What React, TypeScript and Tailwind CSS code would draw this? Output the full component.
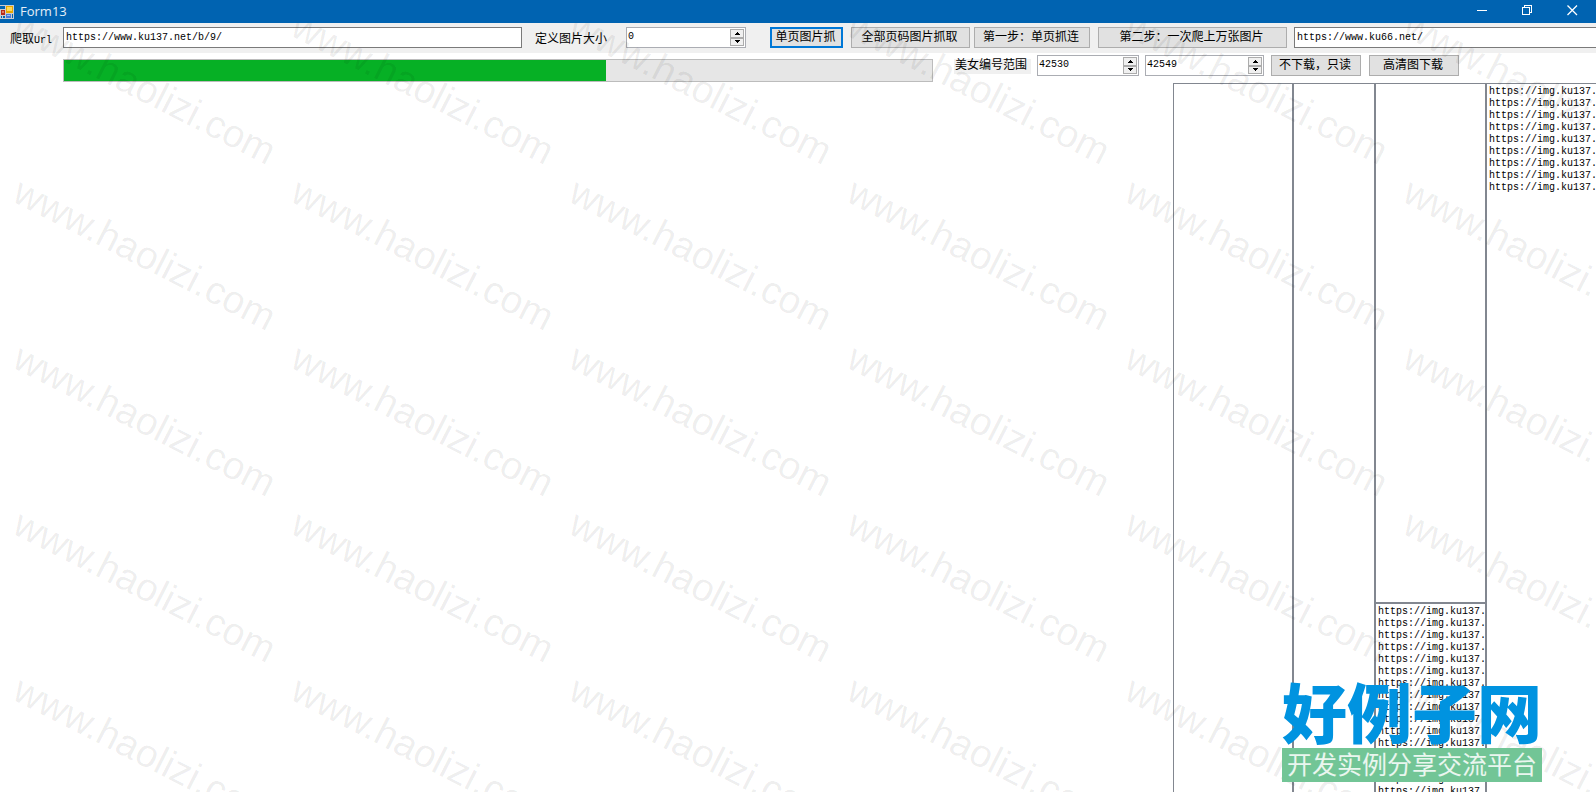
import { ChangeEvent, useState } from "react";
import clsx from "clsx";

const IMAGE_HOST = "https://img.ku137.";

const downloaded = Array.from({ length: 9 }, () => IMAGE_HOST);
const queued = Array.from({ length: 16 }, () => IMAGE_HOST);

export default function App() {
  const [pageUrl, setPageUrl] = useState("https://www.ku137.net/b/9/");
  const [siteUrl, setSiteUrl] = useState("https://www.ku66.net/");

  return (
    <div className="relative flex h-screen flex-col overflow-hidden bg-white font-['Liberation_Mono','Noto_Sans_CJK_SC',monospace] text-xs text-black">
      <TitleBar title="Form13" />

      {/* Toolbar */}
      <div className="flex h-[30px] shrink-0 items-start bg-[#f0f0f0] pt-1 pl-[10px]">
        <label htmlFor="page-url" className="mt-1 w-[53px] shrink-0 leading-[18px] whitespace-nowrap">
          爬取<span className="text-[10px]">Url</span>
        </label>
        <TextBox id="page-url" value={pageUrl} onChange={setPageUrl} className="w-[459px] shrink-0" />
        <label htmlFor="image-size" className="mt-1 ml-[13px] w-[91px] shrink-0 leading-[18px]">
          定义图片大小
        </label>
        <NumberBox id="image-size" initial={0} className="w-[120px]" />
        <PushButton className="ml-6 w-[73px]" focused>单页图片抓</PushButton>
        <PushButton className="ml-2 w-[119px]">全部页码图片抓取</PushButton>
        <PushButton className="ml-1 w-[116px]">第一步：单页抓连</PushButton>
        <PushButton className="ml-2 w-[189px]">第二步：一次爬上万张图片</PushButton>
        <TextBox id="site-url" label="站点" value={siteUrl} onChange={setSiteUrl} className="-mr-1 ml-[7px] min-w-0 flex-1" />
      </div>

      {/* Progress and id range */}
      <div className="flex h-[30px] shrink-0 items-start pt-[2px] pl-[63px]">
        <Progress value={542} max={868} />
        <label htmlFor="range-from" className="mt-1 ml-[21px] w-[77px] shrink-0 bg-[#f0f0f0] pl-px leading-[15px]">
          美女编号范围
        </label>
        <NumberBox id="range-from" initial={42530} className="ml-[6px] w-[102px]" />
        <NumberBox id="range-to" label="结束编号" initial={42549} className="ml-[6px] w-[119px]" />
        <PushButton className="ml-[7px] w-[90px]">不下载，只读</PushButton>
        <PushButton className="ml-2 w-[90px]">高清图下载</PushButton>
      </div>

      {/* Result lists, they run off the right and bottom edges of the window */}
      <div className="-mb-1 flex min-h-0 flex-1 justify-end">
        <ListBox items={[]} className="w-[120px]" />
        <ListBox items={[]} className="w-[82px]" />
        <div className="flex w-[111px] flex-col">
          <ListBox items={[]} className="h-[520px] shrink-0" />
          <ListBox items={queued} className="min-h-0 flex-1" />
        </div>
        <ListBox items={downloaded} className="-mr-1 w-[114px]" />
      </div>

      <Watermark />
      <SiteLogo />
    </div>
  );
}

function TitleBar({ title }: { title: string }) {
  return (
    <header className="flex h-[23px] shrink-0 items-center bg-[#0063b1] text-white">
      <svg className="h-[14px] w-[14px] shrink-0" viewBox="0 0 14 14" shapeRendering="crispEdges">
        <rect width="14" height="14" fill="#c9ccd2" />
        <rect x="0" y="1" width="5" height="3" fill="#0063b1" />
        <rect x="1" y="5" width="4" height="5" fill="#b82a1a" />
        <rect x="2" y="6" width="2" height="2" fill="#e07a60" />
        <rect x="6" y="1" width="7" height="7" fill="#e9a800" />
        <rect x="7" y="2" width="5" height="4" fill="#ffd95a" />
        <rect x="1" y="11" width="1" height="2" fill="#0063b1" />
        <rect x="3" y="11" width="2" height="2" fill="#0063b1" />
        <rect x="6" y="9" width="5" height="4" fill="#4a7ad8" />
        <rect x="7" y="10" width="3" height="1" fill="#9dbcf5" />
        <rect x="12" y="9" width="1" height="4" fill="#0063b1" />
      </svg>
      <h1 className="ml-[6px] flex-1 pb-px font-['Open_Sans','Noto_Sans',sans-serif] text-[13px] leading-5 text-white/90">{title}</h1>
      <div className="flex h-[21px] self-start pr-px">
        <button type="button" aria-label="Minimize" className="flex w-[45px] items-center justify-center">
          <svg className="h-[11px] w-[11px]" viewBox="0 0 11 11" shapeRendering="crispEdges">
            <path d="M0 5.5h10" stroke="white" />
          </svg>
        </button>
        <button type="button" aria-label="Restore" className="flex w-[45px] items-center justify-center">
          <svg className="h-[11px] w-[11px]" viewBox="0 0 11 11" fill="none" stroke="white" shapeRendering="crispEdges">
            <rect x="0.5" y="2.5" width="7" height="7" />
            <path d="M2.5 2.5v-2h7v7h-2" />
          </svg>
        </button>
        <button type="button" aria-label="Close" className="flex w-[45px] items-center justify-center">
          <svg className="h-[11px] w-[11px]" viewBox="0 0 11 11" stroke="white" strokeWidth="1.3">
            <path d="M0.5 0.5l9.5 9.5M10 0.5l-9.5 9.5" />
          </svg>
        </button>
      </div>
    </header>
  );
}

interface TextBoxProps {
  id: string;
  label?: string;
  value: string;
  onChange: (value: string) => void;
  className?: string;
}

function TextBox({ id, label, value, onChange, className }: TextBoxProps) {
  return (
    <input
      id={id}
      type="text"
      aria-label={label}
      value={value}
      onChange={(e: ChangeEvent<HTMLInputElement>) => onChange(e.target.value)}
      className={clsx("h-[21px] border border-[#7a7a7a] bg-white pl-[2px] text-[10px] outline-none", className)}
    />
  );
}

interface NumberBoxProps {
  id: string;
  label?: string;
  initial: number;
  className?: string;
}

function NumberBox({ id, label, initial, className }: NumberBoxProps) {
  const [value, setValue] = useState(initial);

  return (
    <div className={clsx("flex h-[21px] shrink-0 border border-[#abadb3] bg-white p-px", className)}>
      <input
        id={id}
        type="text"
        inputMode="numeric"
        aria-label={label}
        value={value}
        onChange={(e: ChangeEvent<HTMLInputElement>) => setValue(Number(e.target.value) || 0)}
        className="min-w-0 flex-1 pb-[2px] text-[10px] outline-none"
      />
      <div className="flex w-[14px] flex-col bg-[#f0f0f0]">
        <button type="button" aria-label="Increase" onClick={() => setValue(value + 1)} className="flex flex-1 items-center justify-center border border-[#acacac]">
          <svg className="h-[3px] w-[5px] shrink-0" viewBox="0 0 5 3" shapeRendering="crispEdges">
            <path d="M2 0h1v1h1v1h1v1H0V2h1V1h1z" />
          </svg>
        </button>
        <button type="button" aria-label="Decrease" onClick={() => setValue(value - 1)} className="flex flex-1 items-center justify-center border border-[#acacac]">
          <svg className="h-[3px] w-[5px] shrink-0" viewBox="0 0 5 3" shapeRendering="crispEdges">
            <path d="M0 0h5v1H4v1H3v1H2V2H1V1H0z" />
          </svg>
        </button>
      </div>
    </div>
  );
}

interface PushButtonProps {
  children: string;
  focused?: boolean;
  className?: string;
}

function PushButton({ children, focused, className }: PushButtonProps) {
  return (
    <button
      type="button"
      className={clsx(
        "flex h-[21px] shrink-0 items-center justify-center bg-[#e1e1e1] pr-[2px] leading-4 whitespace-nowrap",
        focused ? "border-2 border-[#0078d7]" : "border border-[#adadad] pt-px",
        className,
      )}
    >
      {children}
    </button>
  );
}

function Progress({ value, max }: { value: number; max: number }) {
  return (
    <div
      role="progressbar"
      aria-valuenow={value}
      aria-valuemax={max}
      className="mt-1 h-[23px] max-w-[870px] min-w-0 flex-1 border border-[#bcbcbc] bg-[#e6e6e6]"
    >
      <div className="h-full bg-[#06b025]" style={{ width: `${(value / max) * 100}%` }} />
    </div>
  );
}

function ListBox({ items, className }: { items: string[]; className?: string }) {
  return (
    <ul className={clsx("overflow-hidden border border-[#828790] pt-[2px] pl-[2px] text-[10px] leading-3", className)}>
      {items.map((item, i) => (
        <li key={i} className="whitespace-nowrap">{item}</li>
      ))}
    </ul>
  );
}

/** Repeating diagonal site name laid over the whole window. */
function Watermark() {
  return (
    <div
      aria-hidden
      className="pointer-events-none absolute inset-x-0 top-[23px] bottom-0 overflow-hidden"
    >
      <div className="absolute -top-[17px] left-[25px] grid auto-rows-[166px] grid-cols-[repeat(6,278px)]">
        {Array.from({ length: 30 }, (_, i) => (
          <span
            key={i}
            className="origin-top-left rotate-[27deg] font-['Liberation_Sans',sans-serif] text-[39px] leading-[38px] whitespace-nowrap text-black/7"
          >
            www.haolizi.com
          </span>
        ))}
      </div>
    </div>
  );
}

function SiteLogo() {
  return (
    <div className="pointer-events-none absolute right-[54px] bottom-[10px] w-[260px] font-['Noto_Sans_CJK_SC',sans-serif]">
      <div className="pb-2 text-[65px] leading-[60px] font-black whitespace-nowrap text-[#0093e0]">好例子网</div>
      <div className="bg-[#72c596] pb-1 text-center text-[25px] leading-[30px] whitespace-nowrap text-white/85">
        开发实例分享交流平台
      </div>
    </div>
  );
}
